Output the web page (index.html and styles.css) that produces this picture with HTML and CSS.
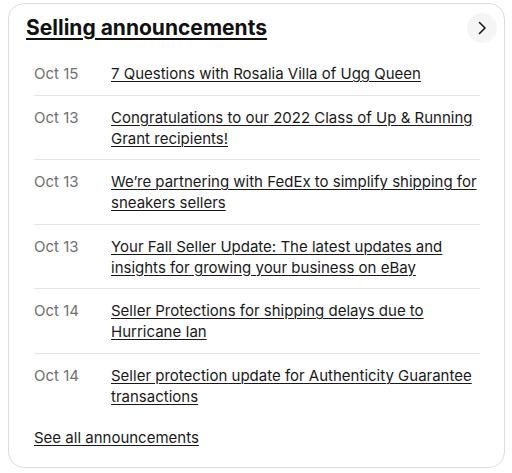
FILE: index.html
```html
<!DOCTYPE html>
<html>
<head>
<meta charset="utf-8">
<link rel="stylesheet" href="styles.css">
</head>
<body>
<section class="card">
  <header class="card-head">
    <h2 class="title"><a href="#">Selling announcements</a></h2>
    <button class="next" aria-label="Next">
      <svg width="16" height="16" viewBox="0 0 16 16"><path d="M5.5 2.5 L11 8 L5.5 13.5" fill="none" stroke="#191919" stroke-width="1.6" stroke-linecap="round" stroke-linejoin="round"/></svg>
    </button>
  </header>
  <ul class="list">
    <li class="item"><span class="date">Oct 15</span><a class="link" href="#">7 Questions with Rosalia Villa of Ugg Queen</a></li>
    <li class="item"><span class="date">Oct 13</span><a class="link" href="#">Congratulations to our 2022 Class of Up &amp; Running Grant recipients!</a></li>
    <li class="item"><span class="date">Oct 13</span><a class="link" href="#">We’re partnering with FedEx to simplify shipping for sneakers sellers</a></li>
    <li class="item"><span class="date">Oct 13</span><a class="link" href="#">Your Fall Seller Update: The latest updates and insights for growing your business on eBay</a></li>
    <li class="item"><span class="date">Oct 14</span><a class="link" href="#">Seller Protections for shipping delays due to Hurricane Ian</a></li>
    <li class="item"><span class="date">Oct 14</span><a class="link" href="#">Seller protection update for Authenticity Guarantee transactions</a></li>
  </ul>
  <a class="see-all" href="#">See all announcements</a>
</section>
</body>
</html>
```
FILE: styles.css
```css
html, body {
  margin: 0;
  padding: 0;
  background: #ffffff;
}
body {
  padding: 3px 7px 0 8px;
  font-family: Inter, "Liberation Sans", sans-serif;
  color: #191919;
}
.card {
  box-sizing: border-box;
  width: 497px;
  height: 465px;
  border: 1px solid #dcdcdc;
  border-radius: 16px;
  padding: 9px 7px 0 17px;
}
.card-head {
  display: flex;
  align-items: center;
  justify-content: space-between;
  height: 30px;
}
.title {
  margin: 0;
  font-size: 21px;
  font-weight: 700;
  line-height: 26px;
}
.title a {
  color: #111111;
  text-decoration: underline;
  text-underline-offset: 3px;
  text-decoration-thickness: 2px;
}
.next {
  width: 30px;
  height: 30px;
  border: none;
  border-radius: 50%;
  background: #f5f5f5;
  display: flex;
  align-items: center;
  justify-content: center;
  padding: 0;
}
.list {
  list-style: none;
  margin: 9px 17px 0 8px;
  padding: 0;
}
.item {
  display: flex;
  padding: 11px 0 10.5px;
  border-bottom: 1px solid #e5e5e5;
  font-size: 15px;
  line-height: 21px;
}
.item:last-child {
  border-bottom: none;
}
.date {
  flex: 0 0 77px;
  color: #707070;
}
.link {
  color: #191919;
  text-decoration: underline;
  text-underline-offset: 2px;
  text-decoration-thickness: 1px;
}
.see-all {
  display: inline-block;
  margin: 10px 0 0 8px;
  font-size: 15px;
  line-height: 21px;
  color: #191919;
  text-decoration: underline;
  text-underline-offset: 2px;
}
```
